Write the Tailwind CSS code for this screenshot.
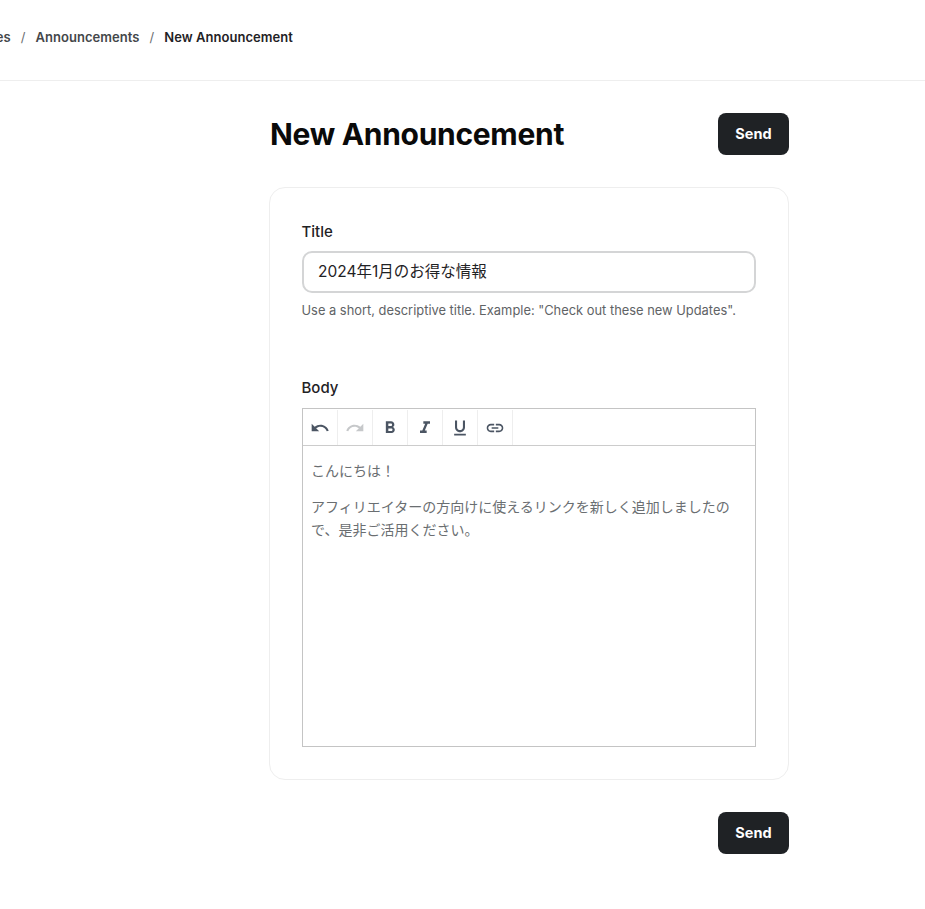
<!DOCTYPE html>
<html lang="ja">
<head>
    <meta charset="UTF-8">
    <meta name="viewport" content="width=device-width, initial-scale=1.0">
    <title>New Announcement</title>
    <script src="https://cdn.jsdelivr.net/npm/@tailwindcss/browser@4"></script>
</head>
<body class="bg-white text-[#1f2225] font-['Inter','Noto_Sans_CJK_JP',sans-serif] overflow-hidden h-[909px]">

    <!-- breadcrumb -->
    <header class="h-[81px] border-b border-[#eeeeee] flex items-center">
        <nav class="w-[293px] shrink-0 flex justify-end items-center overflow-hidden text-[13px] tracking-[0.05px] font-semibold whitespace-nowrap pb-[4px]">
            <span class="text-[#44474a]">Updates</span>
            <span class="text-[#6b6e71] font-normal mx-[10px]">/</span>
            <span class="text-[#44474a]">Announcements</span>
            <span class="text-[#6b6e71] font-normal mx-[10px]">/</span>
            <span class="text-[#1f2225]">New Announcement</span>
        </nav>
    </header>

    <main class="w-[520px] ml-[269px]">
        <div class="flex items-center justify-between h-[42px] mt-[32px]">
            <h1 class="text-[30px] font-bold text-[#0a0a0a] tracking-[-0.3px] pl-px">New Announcement</h1>
            <button type="button" class="w-[71px] h-[42px] rounded-lg bg-[#1f2225] text-white text-[14.5px] font-bold">Send</button>
        </div>

        <div class="mt-[32px] h-[593px] border border-[#eeeeee] rounded-2xl px-[32px] pt-[32px]">
            <label class="block -ml-[0.5px] text-[15px] font-medium leading-[24px]">Title</label>
            <div class="mt-[7px] w-[454px] h-[42px] border-2 border-[#d4d5d6] rounded-[10px] flex items-center pl-[14px] text-[15.5px] text-[#1f2225]">2024年1月のお得な情報</div>
            <p class="mt-[8px] -ml-[0.5px] text-[12.88px] leading-[20px] text-[#5f6366] whitespace-nowrap">Use a short, descriptive title. Example: "Check out these new Updates".</p>

            <label class="block mt-[55px] -ml-[0.5px] text-[15px] font-medium leading-[24px]">Body</label>
            <div class="mt-[8px] w-[454px] h-[339px] border border-[#c4c4c4]">
                <div class="flex h-[37px] pt-px border-b border-[#cccccc]">
                    <!-- undo -->
                    <div class="w-[35px] flex items-center justify-center border-r border-[#eeeeee] text-[#4b5563]">
                        <svg class="w-[20px] h-[20px]" viewBox="0 0 24 24" fill="currentColor"><path d="M12.5 8c-2.65 0-5.05 1-6.9 2.6L2 7v9h9l-3.62-3.62c1.39-1.16 3.16-1.88 5.12-1.88 3.54 0 6.55 2.31 7.6 5.5l2.37-.78C21.08 11.03 17.15 8 12.5 8z"/></svg>
                    </div>
                    <!-- redo -->
                    <div class="w-[35px] flex items-center justify-center border-r border-[#eeeeee] text-[#c6c8ca]">
                        <svg class="w-[20px] h-[20px]" viewBox="0 0 24 24" fill="currentColor"><path d="M18.4 10.6C16.55 9 14.15 8 11.5 8c-4.65 0-8.58 3.03-9.96 7.22L3.9 16c1.05-3.19 4.05-5.5 7.6-5.5 1.95 0 3.73.72 5.12 1.88L13 16h9V7l-3.6 3.6z"/></svg>
                    </div>
                    <!-- bold -->
                    <div class="w-[35px] flex items-center justify-center border-r border-[#eeeeee] text-[#4b5563]">
                        <svg class="w-[20px] h-[20px]" viewBox="0 0 24 24" fill="currentColor"><path d="M15.6 10.79c.97-.67 1.65-1.77 1.65-2.79 0-2.26-1.75-4-4-4H7v14h7.04c2.09 0 3.71-1.7 3.71-3.79 0-1.52-.86-2.82-2.15-3.42zM10 6.5h3c.83 0 1.5.67 1.5 1.5s-.67 1.5-1.5 1.5h-3v-3zm3.5 9H10v-3h3.5c.83 0 1.5.67 1.5 1.5s-.67 1.5-1.5 1.5z"/></svg>
                    </div>
                    <!-- italic -->
                    <div class="w-[35px] flex items-center justify-center border-r border-[#eeeeee] text-[#4b5563]">
                        <svg class="w-[20px] h-[20px]" viewBox="0 0 24 24" fill="currentColor"><path d="M10 4v3h2.21l-3.42 8H6v3h8v-3h-2.21l3.42-8H18V4z"/></svg>
                    </div>
                    <!-- underline -->
                    <div class="w-[35px] flex items-center justify-center border-r border-[#eeeeee] text-[#4b5563]">
                        <svg class="w-[20px] h-[20px]" viewBox="0 0 24 24" fill="currentColor"><path d="M12 17c3.31 0 6-2.69 6-6V3h-2.5v8c0 1.93-1.57 3.5-3.5 3.5S8.500 12.930 8.500 11V3H6v8c0 3.31 2.690 6 6 6zm-7 2v2h14v-2H5z"/></svg>
                    </div>
                    <!-- link -->
                    <div class="w-[35px] flex items-center justify-center border-r border-[#eeeeee] text-[#4b5563]">
                        <svg class="w-[20px] h-[20px]" viewBox="0 0 24 24" fill="currentColor"><path d="M3.900 12c0-1.710 1.390-3.100 3.100-3.100h4V7H7c-2.760 0-5 2.240-5 5s2.240 5 5 5h4v-1.900H7c-1.710 0-3.100-1.390-3.100-3.100zM8 13h8v-2H8v2zm9-6h-4v1.900h4c1.710 0 3.100 1.390 3.100 3.100s-1.390 3.100-3.100 3.100h-4V17h4c2.760 0 5-2.240 5-5s-2.240-5-5-5z"/></svg>
                    </div>
                </div>
                <div class="px-[8px] pt-[13px] font-['Noto_Sans_CJK_JP',sans-serif] text-sm font-normal leading-[23px] text-[#6a6e71]">
                    <p>こんにちは！</p>
                    <p class="mt-[13px]">アフィリエイターの方向けに使えるリンクを新しく追加しましたので、是非ご活用ください。</p>
                </div>
            </div>
        </div>

        <div class="flex justify-end mt-[32px]">
            <button type="button" class="w-[71px] h-[42px] rounded-lg bg-[#1f2225] text-white text-[14.5px] font-bold">Send</button>
        </div>
    </main>
</body>
</html>
